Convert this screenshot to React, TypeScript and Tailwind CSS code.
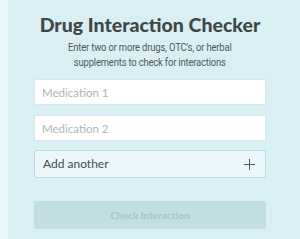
import React from 'react'

const App: React.FC = () => {
    return (
        <div className="flex h-[239px] w-[300px] bg-[#eaf6f9]">
            <div className="ml-[8px] flex flex-1 flex-col items-center bg-[#d9eff4] pr-[8px] pt-[12px]">
                <h1 className="font-['Lato',sans-serif] text-[19.5px] font-black leading-[26px] text-[#3e4848]">
                    Drug Interaction Checker
                </h1>
                <p className="mt-[2px] scale-x-[0.9] text-center font-['Roboto',sans-serif] text-[10.5px] leading-[15px] tracking-[-0.2px] text-[#505858]">
                    Enter two or more drugs, OTC's, or herbal
                    <br />
                    supplements to check for interactions
                </p>
                <div className="mt-[9px] flex w-[232px] flex-col gap-[10px]">
                    <input
                        className="h-[26px] w-full rounded-[2px] border border-[#d3e8ec] bg-white px-[7px] font-['Lato',sans-serif] text-[11.5px] text-[#333] placeholder:text-[#b0b4b6] outline-none"
                        placeholder="Medication 1"
                    />
                    <input
                        className="h-[26px] w-full rounded-[2px] border border-[#d3e8ec] bg-white px-[7px] font-['Lato',sans-serif] text-[11.5px] text-[#333] placeholder:text-[#b0b4b6] outline-none"
                        placeholder="Medication 2"
                    />
                    <button
                        type="button"
                        className="-mt-[1px] flex h-[28px] w-full items-center justify-between rounded-[3px] border border-[#b9d8de] bg-[#ebf7fa] pl-[8px] pr-[10px] font-['Lato',sans-serif] text-[12px] text-[#454c4e]"
                    >
                        <span>Add another</span>
                        <svg className="h-[11px] w-[11px]" viewBox="0 0 11 11" fill="none" stroke="#555" strokeWidth="1">
                            <path d="M5.5 0v11M0 5.5h11" />
                        </svg>
                    </button>
                    <button
                        type="button"
                        className="mt-[13px] h-[28px] w-full rounded-[2px] bg-[#c3dee2] font-['Lato',sans-serif] text-[10px] font-bold text-[#9fc5ca]"
                    >
                        Check Interaction
                    </button>
                </div>
            </div>
        </div>
    )
}

export default App
